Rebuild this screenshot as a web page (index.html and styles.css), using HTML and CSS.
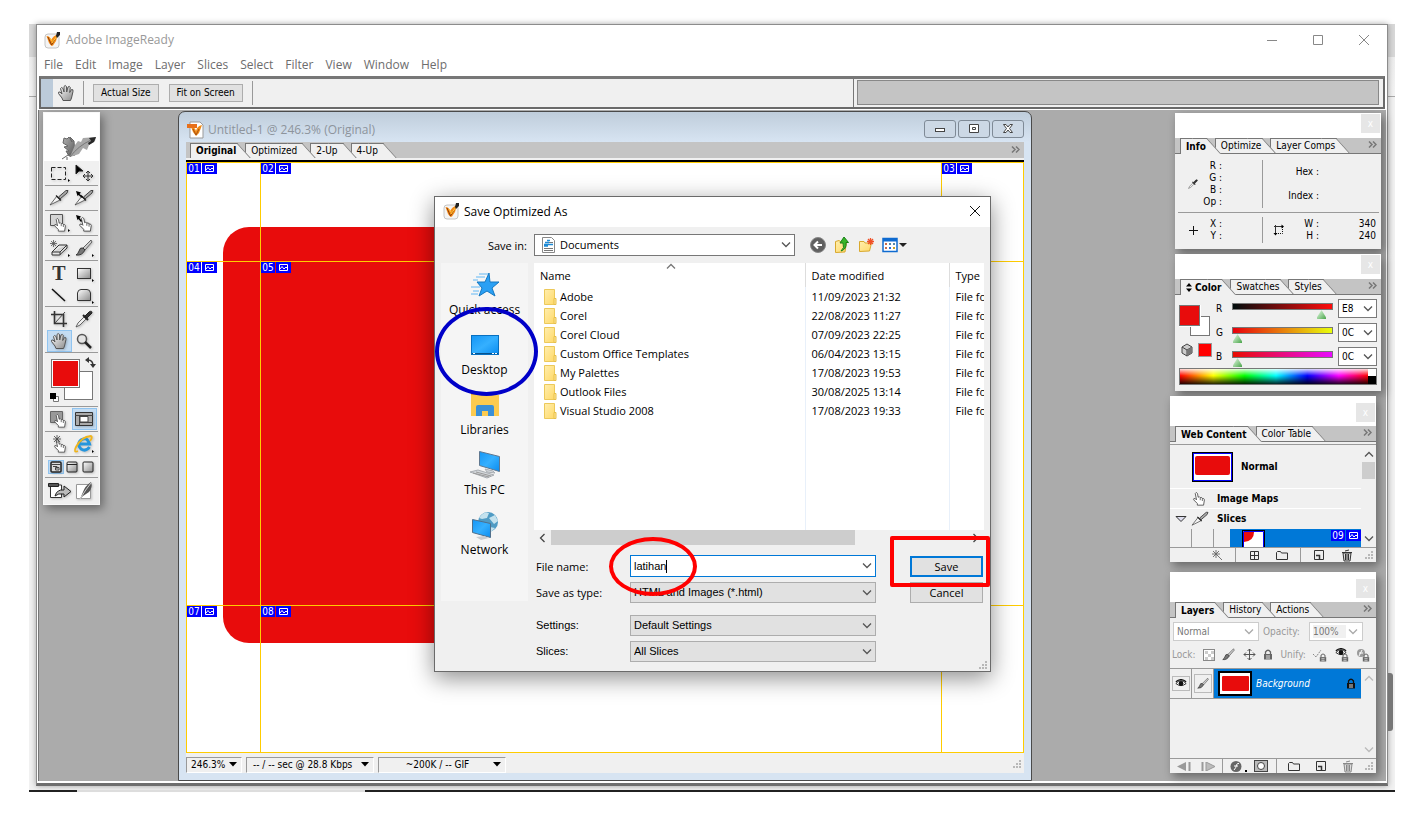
FILE: index.html
```html
<!DOCTYPE html>
<html lang="en">
<head>
<meta charset="utf-8">
<title>Adobe ImageReady</title>
<link rel="stylesheet" href="styles.css">
</head>
<body>
<svg class="sprite" aria-hidden="true">
  <defs>
    <linearGradient id="g-gray" x1="0" y1="0" x2="1" y2="1"><stop offset="0" stop-color="#fff"/><stop offset="1" stop-color="#8c8c8c"/></linearGradient>
    <linearGradient id="g-blue" x1="0" y1="0" x2="1" y2="1"><stop offset="0" stop-color="#1495f5"/><stop offset=".5" stop-color="#35b0ff"/><stop offset="1" stop-color="#0a8cf0"/></linearGradient>
    <linearGradient id="g-folder" x1="0" y1="0" x2="1" y2="1"><stop offset="0" stop-color="#ffeeae"/><stop offset="1" stop-color="#ffd968"/></linearGradient>
    <linearGradient id="g-feather" x1="0" y1="0" x2="1" y2="1"><stop offset="0" stop-color="#b5b5b5"/><stop offset="1" stop-color="#505050"/></linearGradient>
  </defs>
  <symbol id="hand" viewBox="0 0 18 18"><path d="M6 16.500 5 14 1.500 9.500Q1 7.500 3 8L5 10 3.500 4.500Q4.500 2.500 6 4.500L7 8 7 2.500Q8 .500 9.500 2.500L9.700 8 11 3Q12.500 1.500 13.300 3.500L12.700 8.500 14.500 5.500Q16.500 5 16 7.500L14.500 14 13.500 16.500Z" fill="url(#g-gray)" stroke="#555"/></symbol>
  <symbol id="point" viewBox="0 0 16 18"><path d="M6 17V15L1.500 10.500Q1 8 4 9.500L5 10.500 3.500 3Q4.500 .500 6.200 3L7 7.500Q8.500 6 9.500 8 11.500 7 12 9 14 8.500 14.500 10.500L13.500 17Z" fill="#fff" stroke="#444"/><path d="M9.500 8v3M12 9v3" stroke="#555"/></symbol>
  <symbol id="knife" viewBox="0 0 20 18"><path d="M1 16 8 7 11 11Z" fill="#f4f4f4" stroke="#444" stroke-width=".8"/><path d="M9.500 8 17 1.500H19L18 4 11 10Z" fill="#aaa" stroke="#333" stroke-width=".9"/><path d="M7 6.500 12 11.500" stroke="#222" stroke-width="1.200"/></symbol>
  <symbol id="brush" viewBox="0 0 18 18"><path d="M16 1 8 9 10 11 17 3Z" fill="#ccc" stroke="#444" stroke-width=".8"/><path d="M8 9Q5 8 4 12 3 15 1 16 7 17 10 11Z" fill="#777" stroke="#222" stroke-width=".8"/></symbol>
  <symbol id="dropper" viewBox="0 0 18 18"><path d="M1 17 3 13 9 7 11 9 5 15Z" fill="#eee" stroke="#444" stroke-width=".8"/><path d="M8 5 13 10" stroke="#222" stroke-width="2"/><path d="M10 6 14 2Q17 0 17 3L12 8Z" fill="#333" stroke="#222"/></symbol>
  <symbol id="trash" viewBox="0 0 12 13"><path d="M2 4H10L9 12H3Z" fill="#ddd" stroke="currentColor"/><path d="M1 3.500H11M4 2 8 1M4.500 5V11M6 5V11M7.500 5V11" stroke="currentColor" fill="none"/></symbol>
  <symbol id="folder" viewBox="0 0 12 10"><path d="M.500 9.500V2.500L1.500 1.500H4.500L5.500 3H11.500V9.500Z" fill="#eee" stroke="currentColor"/></symbol>
  <symbol id="page" viewBox="0 0 10 10"><path d="M.500 9.500V.500H9.500V9.500Z" fill="#eee" stroke="currentColor"/><path d="M2 5.500H5.500V9" fill="none" stroke="currentColor" stroke-width="1.500"/></symbol>
  <symbol id="grip" viewBox="0 0 9 9"><path d="M6 0h2v2h-2zM3 3h2v2h-2zM6 3h2v2h-2zM0 6h2v2h-2zM3 6h2v2h-2zM6 6h2v2h-2z" fill="#b8b8b8"/></symbol>
  <symbol id="down" viewBox="0 0 10 6"><path d="M1 .500 5 4.500 9 .500" fill="none" stroke="currentColor" stroke-width="1.300"/></symbol>
  <symbol id="tri" viewBox="0 0 8 5"><path d="M0 0H8L4 4.500Z" fill="#000"/></symbol>
  <symbol id="more" viewBox="0 0 9 7"><path d="M1 .500 4 3.500 1 6.500M5 .500 8 3.500 5 6.500" fill="none" stroke="#777" stroke-width="1.500"/></symbol>
  <symbol id="pic" viewBox="0 0 15 11"><path d="M3.500 2.500H11.500V8.500H3.500ZM4 7 6 4.500 8 7 10 5 11 6" fill="none" stroke="#fff"/></symbol>
  <symbol id="lock" viewBox="0 0 10 11"><path d="M2.500 5V3Q5-.500 7.500 3V5" fill="none" stroke="currentColor" stroke-width="1.300"/><path d="M1 5H9V10.500H1Z" fill="currentColor"/><path d="M3 7H7M3 9H7" stroke="#ddd"/></symbol>
  <symbol id="eye" viewBox="0 0 14 10"><path d="M1 5Q7-1.500 13 5 7 10 1 5Z" fill="#fff" stroke="#111"/><circle cx="7" cy="5" r="2.800" fill="#111"/><path d="M1 3Q7-2 13 3" fill="none" stroke="#111" stroke-width="1.500"/></symbol>
  <symbol id="appicon" viewBox="0 0 18 18"><rect x="1" y="3" width="14" height="14" rx="3" fill="#f4f4f4" stroke="#c4c4c4"/><path d="M2.500 5Q6 5 7 9 9 5 14 3L12 10 9 14.500 7.500 15 5 12Z" fill="#f48a18"/><path d="M4 6 7.500 14 11 8" fill="none" stroke="#8a3c08"/><path d="M6 7 8 10M8 12 13 5" stroke="#ffc83a"/><path d="M13 1H16V4L13 7 12 5Z" fill="#222"/></symbol>
  <symbol id="dir" viewBox="0 0 14 16"><path d="M1.500.500H11.500V15.500H1.500Z" fill="url(#g-folder)" stroke="#ecc95a"/><path d="M11 9.500H13V15.500H11Z" fill="#ffe79a" stroke="#e8c04a"/></symbol>
</svg>

<div class="desktop">
  <div class="app">
    <header class="titlebar">
      <svg class="i18"><use href="#appicon"/></svg>
      <h1>Adobe ImageReady</h1>
      <div class="winbtns">
        <button aria-label="Minimize"><svg width="12" height="12"><path d="M1 6.500H11" stroke="#888"/></svg></button>
        <button aria-label="Maximize"><svg width="12" height="12"><path d="M1.500 1.500H10.500V10.500H1.500Z" fill="none" stroke="#888"/></svg></button>
        <button aria-label="Close"><svg width="12" height="12"><path d="M1 1 11 11M11 1 1 11" stroke="#888"/></svg></button>
      </div>
    </header>
    <nav class="menubar">
      <button>File</button><button>Edit</button><button>Image</button><button>Layer</button><button>Slices</button><button>Select</button><button>Filter</button><button>View</button><button>Window</button><button>Help</button>
    </nav>
    <div class="options">
      <span class="handle"></span>
      <svg class="i18"><use href="#hand"/></svg>
      <span class="vline"></span>
      <button>Actual Size</button><button>Fit on Screen</button>
      <span class="vline"></span>
      <div class="well"><span></span></div>
    </div>

    <main class="workspace">
      <aside class="toolbox float">
        <div class="feather"><svg width="36" height="23"><path d="M1 22 10 16M6 20V23M3 1 6 2 8 0 11 5 9 0 13 4 14 18 8 19 5 14 8 14 3 10 7 9 2 6Z" fill="url(#g-feather)" stroke="#666"/><path d="M9 20 14 8 17 4 20 5 22 1 35 0 34 4 28 8 26 13 22 11 18 17Z" fill="#a8a8a8"/><path d="M28 1 35 0 33 5 28 8 27 6 30 4Z" fill="#292929"/><path d="M9 20Q17 9 30 3" stroke="#777" fill="none"/></svg></div>
        <div class="tools">
          <button aria-label="Marquee"><svg width="20" height="18"><rect x="2.500" y="3.500" width="14" height="12" fill="none" stroke="#222" stroke-dasharray="4 2"/><path d="M19 15v3l2-1.500z"/></svg></button>
          <button aria-label="Move"><svg width="20" height="18"><path d="M2 1 9 7 5 7 2 10Z" stroke="#222"/><path d="M14 7V17M9 12H19M12 9l2-2 2 2M12 15l2 2 2-2M11 10l-2 2 2 2M17 10l2 2-2 2" fill="none" stroke="#333"/></svg></button>
        </div>
        <div class="tools">
          <button aria-label="Slice"><svg width="20" height="18"><use href="#knife"/></svg></button>
          <button aria-label="Slice select"><svg width="20" height="18"><use href="#knife"/><path d="M2 2 7 3.500 5.500 5 9 8 8 9 4.500 6 3.500 7Z"/></svg></button>
        </div>
        <div class="tools">
          <button aria-label="Image map"><svg width="20" height="18"><path d="M1.500.500H13.500V11.500H1.500Z" fill="#d5d5d5" stroke="#555"/><use href="#point" x="4" y="3" width="14" height="15"/><path d="M19 15v3l2-1.500z"/></svg></button>
          <button aria-label="Image map select"><svg width="20" height="18"><use href="#point" x="4" y="2" width="15" height="16"/><path d="M2 1 7 2.500 5.500 4 8 7 7 8 4.500 5 3.500 6Z"/></svg></button>
        </div>
        <div class="tools">
          <button aria-label="Eraser"><svg width="20" height="18"><path d="M3 13 10 6H18L11 13ZM3 13V16H10.500L18 9V6" fill="#e4e4e4" stroke="#333"/><path d="M11 13V16" stroke="#333"/><path d="M4.500 1V8M1 4.500H8M2 2l5 5M7 2l-5 5" stroke="#555" stroke-width=".8"/><path d="M19 15v3l2-1.500z"/></svg></button>
          <button aria-label="Brush"><svg width="20" height="18"><use href="#brush"/><path d="M18 15v3l2-1.500z"/></svg></button>
        </div>
        <div class="tools tall">
          <button aria-label="Type" class="type">T</button>
          <button aria-label="Rectangle"><svg width="20" height="18"><rect x="3.500" y="4.500" width="13" height="10" fill="url(#g-gray)" stroke="#333"/><path d="M18 15v3l2-1.500z"/></svg></button>
          <button aria-label="Line"><svg width="20" height="18"><path d="M3 3 16 15" stroke="#111" stroke-width="1.500"/></svg></button>
          <button aria-label="Tab rectangle"><svg width="20" height="18"><path d="M3.500 14.500V7Q4 3.500 7 3.500H13Q16 3.500 16.500 7V14.500Z" fill="url(#g-gray)" stroke="#333"/><path d="M18 15v3l2-1.500z"/></svg></button>
        </div>
        <div class="tools tall">
          <button aria-label="Crop"><svg width="20" height="18"><path d="M2 4.500H14.500V17M5.500 1V13.500H18" fill="none" stroke="#333" stroke-width="1.600"/><path d="M6 13 16 2" stroke="#444"/></svg></button>
          <button aria-label="Eyedropper"><svg width="18" height="18"><use href="#dropper"/></svg></button>
          <button aria-label="Hand" class="on"><svg width="18" height="18"><use href="#hand"/></svg></button>
          <button aria-label="Zoom"><svg width="18" height="18"><circle cx="7" cy="7" r="4.500" fill="#e4e4e4" stroke="#555" stroke-width="1.500"/><path d="M10 10 16 16" stroke="#222" stroke-width="2.500"/></svg></button>
        </div>
        <div class="swatches">
          <svg width="48" height="46"><rect x="16.500" y="14.500" width="28" height="28" fill="#fff" stroke="#777"/><rect x="3.500" y="2.500" width="28" height="28" fill="#fff" stroke="#777"/><rect x="5" y="4" width="25" height="25" fill="#e80c0c"/><path d="M40 3Q45 3 45 9" fill="none" stroke="#333" stroke-width="1.500"/><path d="M37 3 41 0V6ZM42 7H48L45 11Z" fill="#333"/><path d="M5.500 39.500H10.500V44.500H5.500Z" fill="#fff" stroke="#777"/><path d="M2 36H8V42H2Z"/></svg>
        </div>
        <div class="tools">
          <button aria-label="Image map visibility"><svg width="20" height="18"><path d="M1.500 1.500H13.500V12.500H1.500Z" fill="#999" stroke="#666"/><use href="#point" x="4" y="3" width="14" height="15"/></svg></button>
          <button aria-label="Slice visibility" class="on"><svg width="20" height="16"><path d="M1.500 1.500H18.500V14.500H1.500Z" fill="#aaa" stroke="#333"/><path d="M1 4.500H19M5.500 5V14M5 11.500H19" stroke="#444"/><path d="M6 5.500H14V11H6Z" fill="#fff" stroke="#444"/></svg></button>
        </div>
        <div class="tools">
          <button aria-label="Rollover preview"><svg width="20" height="18"><use href="#point" x="4" y="3" width="14" height="15"/><path d="M8 0V8M4 4H12M5 1l6 6M11 1l-6 6" stroke="#444" stroke-width=".8"/></svg></button>
          <button aria-label="Preview in browser"><svg width="20" height="18"><path d="M15.500 12Q12 17 7 14 2 9 7 5 13 1 15.500 9H5" fill="none" stroke="#2695dc" stroke-width="3"/><path d="M4 16Q-1 18 2 12 7 2 17 1 19 2 16 6" fill="none" stroke="#f0b51c" stroke-width="1.800"/><path d="M18 15v3l2-1.500z"/></svg></button>
        </div>
        <div class="tools three">
          <button aria-label="Standard screen" class="on"><svg width="12" height="12"><rect x="1" y="1" width="10" height="10" rx="1" fill="#ddd" stroke="#222" stroke-width="1.500"/><path d="M1 3.500H11M3 5.500H7V8M5.500 6.500H9V9H5.500Z" fill="none" stroke="#444"/></svg></button>
          <button aria-label="Full screen with menu"><svg width="12" height="12"><rect x="1" y="1" width="10" height="10" rx="1" fill="url(#g-gray)" stroke="#222"/><path d="M1 3.500H11" stroke="#222"/></svg></button>
          <button aria-label="Full screen"><svg width="12" height="12"><rect x="1" y="1" width="10" height="10" rx="1" fill="url(#g-gray)" stroke="#222"/></svg></button>
        </div>
        <div class="tools last">
          <button aria-label="Export"><svg width="26" height="18"><path d="M3.500 3V15.500H14.500V3Z" fill="#fff" stroke="#333"/><path d="M1.500 1.500H11.500V4.500H1.500Z" fill="#555" stroke="#222"/><path d="M8 14Q10 7 17 8V4L24 9.500 17 15V12Q11 11 8 14Z" fill="#bbb" stroke="#222"/></svg></button>
          <button aria-label="Edit in Photoshop"><svg width="20" height="18"><path d="M2.500 2.500H16.500V16.500H2.500Z" fill="#fff" stroke="#999"/><path d="M17 0Q19 5 15 10L9 14 6 17 9 10Q11 4 17 0Z" fill="#555"/><path d="M6 17Q12 7 17 1" stroke="#ccc" fill="none"/></svg></button>
        </div>
      </aside>

      <section class="doc">
        <header class="doc-title">
          <svg class="i18"><path d="M3 1H13L16 4V17H3Z" fill="#fff" stroke="#999"/><path d="M4 6Q8 6 9 10 10 5 15 4L12 12 9 15 6 11Z" fill="#f08a15"/><path d="M6 8 9 14 12 8" fill="none" stroke="#a85010"/><path d="M0 3H10V7H0Z" fill="#e8701a"/></svg>
          <h2>Untitled-1 @ 246.3% (Original)</h2>
          <div class="doc-btns">
            <button aria-label="Minimize"><svg width="12" height="10"><rect x="1.500" y="4.500" width="9" height="3" fill="#fff" stroke="#444"/></svg></button>
            <button aria-label="Restore"><svg width="12" height="10"><path d="M1.500.500H10.500V8.500H1.500ZM4.500 3.500H7.500V5.500H4.500Z" fill="#fff" stroke="#444"/></svg></button>
            <button aria-label="Close"><svg width="12" height="10"><path d="M1.500.500H4L6 3 8 .500H10.500L7.500 4.500 10.500 8.500H8L6 6 4 8.500H1.500L4.500 4.500Z" fill="#fff" stroke="#444"/></svg></button>
          </div>
        </header>
        <div class="tabs doc-tabs">
          <button class="tab active">Original</button><button class="tab">Optimized</button><button class="tab">2-Up</button><button class="tab">4-Up</button>
          <svg class="more"><use href="#more"/></svg>
        </div>
        <div class="canvas">
          <div class="shape"></div>
          <div class="slice"><span>01</span><svg><use href="#pic"/></svg></div>
          <div class="slice"><span>02</span><svg><use href="#pic"/></svg></div>
          <div class="slice"><span>03</span><svg><use href="#pic"/></svg></div>
          <div class="slice"><span>04</span><svg><use href="#pic"/></svg></div>
          <div class="slice"><span>05</span><svg><use href="#pic"/></svg></div>
          <div class="slice"></div>
          <div class="slice"><span>07</span><svg><use href="#pic"/></svg></div>
          <div class="slice"><span>08</span><svg><use href="#pic"/></svg></div>
          <div class="slice"></div>
        </div>
        <footer class="status">
          <button class="zoom">246.3%<svg><use href="#tri"/></svg></button>
          <button class="stat">-- / -- sec @ 28.8 Kbps<svg><use href="#tri"/></svg></button>
          <button class="stat">~200K / -- GIF<svg><use href="#tri"/></svg></button>
          <svg class="grip"><use href="#grip"/></svg>
        </footer>
      </section>

      <section class="panel float info">
        <div class="panel-top"><button aria-label="Close">x</button></div>
        <div class="tabs"><button class="tab active">Info</button><button class="tab">Optimize</button><button class="tab">Layer Comps</button><svg class="more"><use href="#more"/></svg></div>
        <div class="info-body">
          <div class="cell"><svg width="10" height="10"><use href="#dropper"/></svg><div class="keys"><span>R :</span><span>G :</span><span>B :</span><span>Op :</span></div></div>
          <div class="cell hex"><div class="keys wide"><span>Hex :</span><span>Index :</span></div></div>
          <div class="cell"><svg width="10" height="10"><path d="M5.500 1V10M1 5.500H10" stroke="#111"/></svg><div class="keys"><span>X :</span><span>Y :</span></div></div>
          <div class="cell"><svg width="12" height="12"><path d="M1 2.500H9M2.500 1V10" stroke="#333"/><path d="M9.500 3V9.500H3" fill="none" stroke="#111" stroke-dasharray="1 1"/><path d="M8.500.500 11 2.500 8.500 4.500ZM.500 9 2.500 11.500 4.500 9Z"/></svg><div class="keys"><span>W :</span><span>H :</span></div><div class="keys vals"><span>340</span><span>240</span></div></div>
        </div>
      </section>

      <section class="panel float color">
        <div class="panel-top"><button aria-label="Close">x</button></div>
        <div class="tabs"><button class="tab active"><svg width="6" height="9"><path d="M0 3.500 3 0 6 3.500ZM0 5.500 3 9 6 5.500Z"/></svg>Color</button><button class="tab">Swatches</button><button class="tab">Styles</button><svg class="more"><use href="#more"/></svg></div>
        <div class="color-body">
          <svg class="chips" width="34" height="56"><rect x="11.500" y="11.500" width="19" height="19" fill="#fff" stroke="#777"/><rect x="0" y="0" width="22" height="22" fill="#fff"/><rect x=".5" y=".5" width="20" height="20" fill="#e80c0c" stroke="#777"/><path d="M3 42 8 39 13 42V48L8 51 3 48Z" fill="#ccc" stroke="#444"/><path d="M3 42 8 45 13 42M8 45V51" fill="none" stroke="#444"/><path d="M8 45V51L13 48V42Z" fill="#777"/><rect x="19.500" y="38.500" width="13" height="13" fill="red" stroke="#999"/></svg>
          <div class="channels">
            <label for="r">R</label><input id="r" class="r" type="range" min="0" max="255" value="238"><span class="combo"><select aria-label="Red value"><option>E8</option></select><svg class="chev"><use href="#down"/></svg></span>
            <label for="g">G</label><input id="g" class="g" type="range" min="0" max="255" value="0"><span class="combo"><select aria-label="Green value"><option>0C</option></select><svg class="chev"><use href="#down"/></svg></span>
            <label for="b">B</label><input id="b" class="b" type="range" min="0" max="255" value="0"><span class="combo"><select aria-label="Blue value"><option>0C</option></select><svg class="chev"><use href="#down"/></svg></span>
          </div>
          <div class="spectrum"><span></span></div>
        </div>
      </section>

      <section class="panel float web">
        <div class="panel-top"><button aria-label="Close">x</button></div>
        <div class="tabs"><button class="tab active">Web Content</button><button class="tab">Color Table</button><svg class="more"><use href="#more"/></svg></div>
        <div class="scroller">
          <div class="rows">
            <div class="row normal"><svg width="41" height="30"><rect width="41" height="30"/><rect x="1.500" y="1.500" width="38" height="27" fill="#fff" stroke="#00f"/><rect x="3" y="4" width="35" height="19" rx="2" fill="#e80c0c"/></svg><b>Normal</b></div>
            <div class="row maps"><svg width="14" height="15"><use href="#point"/></svg><b>Image Maps</b></div>
            <div class="row slices"><svg width="12" height="8"><path d="M1 1.500H11L6 6.500Z" fill="#dde" stroke="#333"/></svg><svg width="20" height="16"><use href="#knife"/></svg><b>Slices</b></div>
            <div class="row nine"><span class="box"></span><span class="box"></span><span class="gap"></span><div class="sel"><svg width="23" height="17"><rect x=".5" y=".5" width="22" height="20" fill="#fff" stroke="#000"/><path d="M2 2H12Q12 11 2 12Z" fill="#e80c0c"/><path d="M1.500 17V1.500H21.500V17" fill="none" stroke="#00f"/></svg><span class="slice"><span>09</span><svg><use href="#pic"/></svg></span></div></div>
          </div>
          <div class="vscroll"><svg class="up"><use href="#down"/></svg><span class="thumb"></span><svg class="dn"><use href="#down"/></svg></div>
        </div>
        <div class="panel-tools">
          <button aria-label="Rollover state"><svg width="12" height="12"><path d="M5 1V9M1 5H9M2 2 11 11M8 2 2 8" stroke="#666" stroke-width=".9"/></svg></button><i></i>
          <button aria-label="Slice grid"><svg width="11" height="11"><path d="M1.500 1.500H9.500V9.500H1.500ZM5.500 1V10M1 5.500H10" fill="none" stroke="#333"/></svg></button>
          <button aria-label="New folder"><svg width="12" height="10"><use href="#folder"/></svg></button><i></i>
          <button aria-label="New slice"><svg width="10" height="10"><use href="#page"/></svg></button>
          <button aria-label="Delete"><svg width="12" height="13"><use href="#trash"/></svg></button>
          <svg class="grip"><use href="#grip"/></svg>
        </div>
      </section>

      <section class="panel float layers">
        <div class="panel-top"><button aria-label="Close">x</button></div>
        <div class="tabs"><button class="tab active">Layers</button><button class="tab">History</button><button class="tab">Actions</button><svg class="more"><use href="#more"/></svg></div>
        <div class="blend">
          <span class="combo"><select aria-label="Blend mode"><option>Normal</option></select><svg class="chev"><use href="#down"/></svg></span>
          <label for="opacity">Opacity:</label>
          <span class="combo pct"><select id="opacity"><option>100%</option></select><svg class="chev"><use href="#down"/></svg></span>
        </div>
        <div class="locks">
          <span>Lock:</span>
          <button aria-label="Lock transparency"><svg width="12" height="12"><rect x=".5" y=".5" width="11" height="11" fill="#fff" stroke="#888"/><path d="M2 2h3v3h3v-3h3v3h-3v3h3v3h-3v-3h-3v3h-3v-3h3v-3h-3z" fill="#ccc"/></svg></button>
          <button aria-label="Lock pixels"><svg width="13" height="13"><use href="#brush"/></svg></button>
          <button aria-label="Lock position"><svg width="13" height="13"><path d="M6.500 1V12M1 6.500H12M4.500 3l2-2 2 2M4.500 10l2 2 2-2M3 4.500l-2 2 2 2M10 4.500l2 2-2 2" fill="none" stroke="#555"/></svg></button>
          <button aria-label="Lock all"><svg width="10" height="11"><use href="#lock"/></svg></button>
          <span>Unify:</span>
          <button aria-label="Unify position"><svg width="14" height="14"><path d="M0 6 3 9 8 2" fill="none" stroke="#888" stroke-dasharray="2 1"/><use href="#lock" x="6" y="5" width="8" height="9"/></svg></button>
          <button aria-label="Unify visibility"><svg width="14" height="14"><use href="#eye" width="12" height="9"/><use href="#lock" x="6" y="5" width="8" height="9"/></svg></button>
          <button aria-label="Unify style"><svg width="14" height="14"><circle cx="5" cy="5" r="4" fill="#999"/><path d="M3 8 6 2M3 5H7" stroke="#fff"/><use href="#lock" x="6" y="5" width="8" height="9"/></svg></button>
        </div>
        <div class="scroller">
          <div class="rows">
            <div class="layer">
              <button aria-label="Visibility"><svg width="12" height="9"><use href="#eye"/></svg></button>
              <button aria-label="Editing"><svg width="12" height="13"><use href="#brush"/></svg></button>
              <div class="sel"><svg width="34" height="25"><rect x="1" y="1" width="32" height="23" fill="#fff" stroke="#000" stroke-width="2"/><rect x="4" y="5" width="27" height="15" rx="1" fill="#e80c0c"/></svg><em>Background</em><svg class="lk"><use href="#lock"/></svg></div>
            </div>
          </div>
          <div class="vscroll off"><svg class="up"><use href="#down"/></svg><svg class="dn"><use href="#down"/></svg></div>
        </div>
        <div class="panel-tools">
          <button aria-label="Previous frame"><svg width="15" height="9"><path d="M0 4.500 9 0V9Z" fill="#999"/><path d="M12.500 0V9" stroke="#999" stroke-width="2"/></svg></button>
          <button aria-label="Next frame"><svg width="15" height="9"><path d="M15 4.500 6 0V9Z" fill="#bbb" stroke="#999"/><path d="M2.500 0V9" stroke="#999" stroke-width="2"/></svg></button><i></i>
          <button aria-label="Layer style"><svg width="18" height="13"><circle cx="6" cy="6.500" r="5.500" fill="#666"/><path d="M4 10Q6 8 6.500 5 7 3 9 3.500M4 6H8" fill="none" stroke="#fff"/><path d="M15 10h2v2h-2z"/></svg></button>
          <button aria-label="Layer mask"><svg width="14" height="12"><rect x=".5" y=".5" width="13" height="11" fill="#bbb" stroke="#444"/><circle cx="7" cy="6" r="3.500" fill="#fff" stroke="#444"/></svg></button><i></i>
          <button aria-label="New set"><svg width="12" height="10"><use href="#folder"/></svg></button>
          <button aria-label="New layer"><svg width="10" height="10"><use href="#page"/></svg></button>
          <button aria-label="Delete layer" class="dim"><svg width="12" height="13"><use href="#trash"/></svg></button>
          <svg class="grip"><use href="#grip"/></svg>
        </div>
      </section>
    </main>
  </div>
  <span class="bg-thumb"></span>
  <span class="bg-edge"></span>

  <form class="dialog" onsubmit="return false">
    <header class="dlg-title"><svg class="i18"><use href="#appicon"/></svg><h2>Save Optimized As</h2><button type="button" aria-label="Close"><svg width="12" height="12"><path d="M1 1 11 11M11 1 1 11" stroke="#111"/></svg></button></header>
    <div class="savein">
      <label for="savein">Save in:</label>
      <span class="combo"><svg class="docicon" width="13" height="16"><path d="M.500.500H9.500L12.500 3.500V15.500H.500Z" fill="#fff" stroke="#888"/><path d="M5 3.500H8M3 5.500H7M2 7.500H11M2 9H6" stroke="#1d8ad6" stroke-width="1.500"/><path d="M7 5.500H11M2 11.500H11M2 13.500H11" stroke="#777"/></svg><select id="savein"><option>Documents</option></select><svg class="chev"><use href="#down"/></svg></span>
      <button type="button" aria-label="Back"><svg width="16" height="16"><circle cx="8" cy="8" r="7.500" fill="#606060" stroke="#888"/><path d="M12 8H5M8 4.500 4.500 8 8 11.500" stroke="#fff" stroke-width="2" fill="none"/></svg></button>
      <button type="button" aria-label="Up one level"><svg width="16" height="16"><path d="M1.500 15.500V4.500L5 3.500 7 5H12.500L11 15Z" fill="url(#g-folder)" stroke="#d9a92e"/><path d="M7 14Q11 11 9 6H6L10 0 14.500 5.500H12Q13 12 7 14Z" fill="#38b528" stroke="#188018"/></svg></button>
      <button type="button" aria-label="New folder"><svg width="16" height="16"><path d="M1.500 14.500V4.500H6L7 6H13.500L11.500 14Z" fill="url(#g-folder)" stroke="#d9a92e"/><path d="M12.500 1V8M9 4.500H16M10 2l5 5M15 2l-5 5" stroke="#f05028" stroke-width="1.300"/></svg></button>
      <button type="button" aria-label="View menu"><svg width="25" height="16"><rect x="1" y="1.500" width="14" height="13" fill="#fff" stroke="#0f6bd0" stroke-width="1.500"/><path d="M1 3H15" stroke="#0f6bd0" stroke-width="3"/><path d="M3 6h2v2H3zM3 10h2v2H3z" fill="#c86a4a"/><path d="M7 6h2v2H7zM11 6h2v2h-2z" fill="#58a"/><path d="M7 10h2v2H7z" fill="#246bd8"/><path d="M11 10h2v2h-2z" fill="#c8a020"/><path d="M17 6H25L21 10Z" fill="#222"/></svg></button>
    </div>
    <div class="dlg-body">
      <nav class="places">
        <button type="button"><svg width="30" height="30"><path d="M19 2 20 11 29 11 22 17 25 25 17 20 9 25 12 17 7 11 15 11Z" fill="#2aa0f4" stroke="#1477c0"/><path d="M9 3H18M6 6H15M3 9H8M1 16H10M3 20H9M1 23H8" stroke="#62b8f4"/></svg>Quick access</button>
        <button type="button"><svg width="30" height="30"><rect x="1.500" y="4.500" width="27" height="19" fill="url(#g-blue)" stroke="#0870c0"/><path d="M2 22.500H28" stroke="#07528c"/><path d="M3 22.500H5M22 22.500H28" stroke="#fff" stroke-dasharray="2 1"/></svg>Desktop</button>
        <button type="button"><svg width="30" height="30"><path d="M1 2H11L13 4H29V25H1Z" fill="#fccb50"/><path d="M1 2H11L13 4H1Z" fill="#e8a53a"/><path d="M6 25V16Q6 14 8 14H22Q24 14 24 16V25H18V20H12V25Z" fill="#3a90d8"/></svg>Libraries</button>
        <button type="button"><svg width="32" height="30"><path d="M10.500.500 30.500 5.500V20.500L10.500 14.500Z" fill="url(#g-blue)" stroke="#607890"/><path d="M16 18 24 20 26 22 18 21ZM1 21 9 19 25 24 18 27Z" fill="#d4d8dc" stroke="#a8adb2"/><path d="M4 22 20 26M7 21 22 25" stroke="#999"/></svg>This PC</button>
        <button type="button"><svg width="30" height="30"><circle cx="18" cy="11" r="10" fill="#4f9bc4"/><path d="M9 7Q14 0 19 2L17 7 12 8ZM19 7 25 4 28 10 24 13ZM20 16 25 17 21 21Z" fill="#c4e2ee"/><path d="M2.500 8.500 20.500 12.500V26.500L2.500 21.500Z" fill="url(#g-blue)" stroke="#50708c"/><path d="M6 26 14 25 19 27 11 29Z" fill="#c8ccd0"/></svg>Network</button>
      </nav>
      <div class="dlg-main">
        <div class="list">
          <table>
            <colgroup><col><col class="c2"><col class="c3"></colgroup>
            <thead><tr><th>Name<svg class="sort"><use href="#down"/></svg></th><th>Date modified</th><th>Type</th></tr></thead>
            <tbody>
              <tr><td><svg><use href="#dir"/></svg>Adobe</td><td>11/09/2023 21:32</td><td>File fo</td></tr>
              <tr><td><svg><use href="#dir"/></svg>Corel</td><td>22/08/2023 11:27</td><td>File fo</td></tr>
              <tr><td><svg><use href="#dir"/></svg>Corel Cloud</td><td>07/09/2023 22:25</td><td>File fo</td></tr>
              <tr><td><svg><use href="#dir"/></svg>Custom Office Templates</td><td>06/04/2023 13:15</td><td>File fo</td></tr>
              <tr><td><svg><use href="#dir"/></svg>My Palettes</td><td>17/08/2023 19:53</td><td>File fo</td></tr>
              <tr><td><svg><use href="#dir"/></svg>Outlook Files</td><td>30/08/2025 13:14</td><td>File fo</td></tr>
              <tr><td><svg><use href="#dir"/></svg>Visual Studio 2008</td><td>17/08/2023 19:33</td><td>File fo</td></tr>
              <tr class="fill"><td></td><td></td><td></td></tr>
            </tbody>
          </table>
        </div>
        <div class="hscroll"><svg class="lf"><use href="#down"/></svg><span></span><svg class="rt"><use href="#down"/></svg></div>
        <div class="fields">
          <label for="fname">File name:</label>
          <span class="combo file"><input id="fname" type="text" value="latihan"><i class="caret"></i><svg class="chev"><use href="#down"/></svg></span>
          <button class="save">Save</button>
          <label for="ftype">Save as type:</label>
          <span class="combo"><select id="ftype"><option>HTML and Images (*.html)</option></select><svg class="chev"><use href="#down"/></svg></span>
          <button type="button">Cancel</button>
          <label for="fset" class="apart">Settings:</label>
          <span class="combo apart"><select id="fset"><option>Default Settings</option></select><svg class="chev"><use href="#down"/></svg></span>
          <label for="fslices" class="own">Slices:</label>
          <span class="combo"><select id="fslices"><option>All Slices</option></select><svg class="chev"><use href="#down"/></svg></span>
        </div>
      </div>
    </div>
    <svg class="grip"><use href="#grip"/></svg>
    <span class="mark mark-desktop"></span>
    <span class="mark mark-name"></span>
    <span class="mark mark-save"></span>
  </form>
</div>
</body>
</html>
```

FILE: styles.css
```css
:root {
  --ui: "Open Sans", "Noto Sans", sans-serif;
  --small: "DejaVu Sans Condensed", "DejaVu Sans", sans-serif;
  --face: #f0f0f0;
  --line: #9a9a9a;
}
* { box-sizing: border-box; }
body {
  margin: 0;
  padding: 24px 33px 32px 29px;
  min-height: 100vh;
  display: flex;
  background: #fff;
  font: 10px/12px var(--small);
  color: #000;
}
h1, h2 { margin: 0; font-weight: normal; }
button, select, input { font: inherit; color: inherit; margin: 0; padding: 0; border: 0; background: none; }
svg { display: block; flex: none; }
.sprite { position: absolute; width: 0; height: 0; }
.i18 { width: 18px; height: 18px; }
.grip { width: 9px; height: 9px; }

.desktop {
  position: relative;
  flex: 1;
  display: flex;
  padding: 0 7px 4px 7px;
  background: linear-gradient(#d8d8d8 33px, #eee 33px, #f4f4f4 72px, #aaa 72px, #aaa 73px, #f2f2f2 73px);
  border-bottom: 2px solid #222;
}
.bg-edge { position: absolute; left: 48px; width: 288px; bottom: -2px; height: 2px; background: #ddd; }
.bg-thumb { position: absolute; right: 2px; top: 649px; width: 5px; height: 58px; background: #777; border-radius: 0 3px 3px 0; }

.app {
  flex: 1;
  display: flex;
  flex-direction: column;
  background: #fff;
  border: 1px solid #8c8c8c;
  border-bottom: 3px solid #6e6e6e;
  box-shadow: 0 0 6px rgba(0,0,0,.35);
}
.titlebar { display: flex; align-items: center; gap: 4px; height: 29px; padding-left: 7px; font: 12px/16px var(--ui); color: #999; }
.titlebar h1 { font-size: 12px; }
.winbtns { margin-left: auto; display: flex; }
.winbtns button { width: 46px; display: grid; place-items: center; }
.menubar { display: flex; gap: 12px; padding: 0 7px; height: 22px; align-items: center; font: 12px/16px var(--ui); color: #6d6d6d; }
.options {
  display: flex; align-items: center;
  height: 33px; margin: 0 2px;
  background: var(--face);
  border: 2px solid #6a6a6a;
  border-top: 3px solid #777;
}
.handle { align-self: stretch; width: 12px; margin-right: 4px; background: #bccbda; }
.vline { width: 1px; height: 24px; background: #999; margin: 0 9px 0 8px; }
.options button { height: 18px; margin-right: 10px; padding: 0 7px; background: #e1e1e1; border: 1px solid #adadad; }
.options button + .vline { margin: 0 0 0 -1px; }
.well { margin-left: auto; width: 530px; align-self: stretch; padding: 1px 4px 2px 3px; display: flex; border-left: 1px solid #777; }
.well span { flex: 1; background: #c4c4c4; border: 1px solid #888; }

.workspace { position: relative; flex: 1; margin: 1px 1px 2px; background: #ababab; border-left: 1px solid #777; }
.float { position: absolute; background: var(--face); box-shadow: 3px 4px 9px rgba(0,0,0,.4); }

.toolbox { left: 4px; top: 2px; width: 57px; border: 1px solid #f8f8f8; }
.feather { height: 48px; background: #fff; display: flex; align-items: flex-end; padding: 0 0 1px 17px; }
.tools {
  display: grid; grid-template-columns: 25px 25px; justify-content: center;
  grid-auto-rows: 22px; align-content: center; min-height: 25px;
  margin: 0 1px; border-bottom: 1px solid var(--line);
}
.tools.tall { min-height: 46px; }
.tools button, .swatches { display: grid; place-items: center; }
.tools svg { overflow: visible; filter: drop-shadow(1px 1px 1px rgba(0,0,0,.2)); }
.tools .on { background: #c4dcf2; outline: 1px solid #90c4f0; outline-offset: -1px; }
.tools .type { font: bold 20px/20px "Liberation Serif", serif; color: #333; }
.swatches { height: 54px; margin: 0 1px; border-bottom: 1px solid var(--line); }
.tools.three { grid-template-columns: 16px 16px 16px; grid-auto-rows: 14px; min-height: 21px; }
.tools.last { border: 0; min-height: 26px; }

.doc {
  position: absolute; left: 139px; right: 354px; top: 1px; bottom: 0;
  display: flex; flex-direction: column;
  padding: 0 7px 7px;
  background: linear-gradient(#bfcddb, #d7e4f2 30px);
  border: 1px solid #4a4a4a; border-radius: 7px 7px 0 0;
}
.doc-title { display: flex; align-items: center; gap: 3px; height: 30px; padding: 5px 0 0 1px; color: #8d949c; font: 12px/16px var(--ui); }
.doc-title h2 { font-size: 12px; }
.doc-btns { margin-left: auto; display: flex; gap: 2px; padding-bottom: 2px; }
.doc-btns button { width: 32px; height: 18px; display: grid; place-items: center; border: 1px solid #7f8a96; border-radius: 3px; background: #ccd8e5; }

.tabs { display: flex; align-items: flex-end; height: 16px; padding: 0 4px 0 5px; background: #c4c4c4; border-bottom: 1px solid #777; }
.tab {
  position: relative; display: flex; align-items: center; gap: 3px;
  height: 15px; padding: 0 1px 0 5px; white-space: pre;
  background: var(--face); border-top: 1px solid #777; border-left: 1px solid #777;
}
.tab::after {
  content: ""; position: absolute; z-index: -1; top: -1px; bottom: 0; right: -7px; width: 14px;
  background: var(--face); border-top: 1px solid #777; border-right: 1px solid #777; transform: skewX(42deg);
}
.tab + .tab { margin-left: 8px; }
.tab:nth-of-type(1) { z-index: 4; }
.tab:nth-of-type(2) { z-index: 3; }
.tab:nth-of-type(3) { z-index: 2; }
.tab:nth-of-type(4) { z-index: 1; }
.tab.active { font-weight: bold; height: 16px; margin-bottom: -1px; }
.more { width: 9px; height: 7px; margin: 0 0 5px auto; }
.doc-tabs { height: 20px; padding: 0 4px 2px; background: #c4c4c4 linear-gradient(#f0f0f0,#f0f0f0) bottom / 100% 2px no-repeat; border-bottom: 2px solid #000; }
.doc-tabs .tab.active { height: 15px; margin: 0; }
.doc-tabs .tab + .tab { padding-right: 5px; }

.canvas {
  position: relative; flex: 1; display: grid;
  grid-template-columns: 74px 1fr 81px; grid-template-rows: 99px 1fr 146px;
  background: #fff; border: 1px solid #fc0;
}
.shape { position: absolute; left: 36px; right: 36px; top: 64px; bottom: 109px; background: #e80c0c; border-radius: 26px; }
.slice { position: relative; display: flex; align-items: flex-start; gap: 1px; }
.slice > span { width: 14px; height: 11px; background: #00f; color: #fff; font: 10px/11px var(--small); text-align: center; }
.slice > svg { width: 15px; height: 11px; background: #00f; }
.canvas .slice:not(:nth-child(3n+1)) { border-right: 1px solid #fc0; }
.canvas .slice:nth-child(-n+7) { border-bottom: 1px solid #fc0; }

.status { display: flex; align-items: center; height: 20px; gap: 4px; background: var(--face); padding-top: 3px; }
.status button { display: flex; align-items: center; height: 16px; padding: 0 4px; border: 1px solid; border-color: #999 #fff #fff #999; gap: 4px; }
.status button svg { width: 8px; height: 5px; }
.status .stat { width: 128px; gap: 9px; justify-content: flex-end; }
.status .stat + .stat { gap: 24px; }
.status .grip { margin-left: auto; margin-right: 2px; }

.panel { width: 206px; display: flex; flex-direction: column; }
.panel-top { height: 25px; padding: 1px 1px; background: #fff; text-align: right; }
.panel-top button { width: 19px; height: 19px; background: #e6e6e6; color: #fff; }
.web .panel-top, .layers .panel-top { height: 30px; padding-top: 7px; }
.info { right: 5px; top: 3px; height: 136px; }
.color { right: 5px; top: 144px; height: 137px; }
.web { right: 10px; top: 286px; height: 166px; }
.layers { right: 10px; top: 462px; height: 201px; }

.info-body { flex: 1; display: grid; grid-template-columns: 85px 1fr; grid-template-rows: 57px 1fr; padding: 2px 2px 2px 3px; }
.cell { display: flex; align-items: center; padding: 0 3px 0 10px; }
.cell:nth-child(-n+2) { border-bottom: 1px solid var(--line); }
.cell:nth-child(odd) { background: linear-gradient(var(--line), var(--line)) right / 1px calc(100% - 8px) no-repeat; }
.cell:nth-child(even) { padding-left: 10px; }
.keys { display: flex; flex-direction: column; width: 24px; text-align: right; }
.cell:nth-child(even) .keys { width: 34px; }
.cell .keys.wide { width: 46px; gap: 12px; }
.cell .keys.vals { width: auto; margin-left: auto; }

.color-body { flex: 1; display: grid; grid-template-columns: 34px 1fr; padding: 4px 4px 5px; gap: 0 2px; position: relative; }
.chips { margin-top: 6px; }
.channels { display: grid; grid-template-columns: 11px 101px 39px; gap: 5px 5px; justify-content: end; align-content: start; align-items: center; }
.channels input { appearance: none; align-self: start; width: 101px; height: 7px; margin-top: 4px; }
.channels input::-webkit-slider-runnable-track { height: 7px; border: 1px solid #777; background: var(--ramp); }
.channels input::-webkit-slider-thumb { appearance: none; width: 9px; height: 9px; margin-top: 6px; background: linear-gradient(135deg, #eaffea, #49a449); clip-path: polygon(50% 0, 100% 80%, 100% 100%, 0 100%, 0 80%); }
.r { --ramp: linear-gradient(90deg, #000c0c, #ff0c0c); }
.g { --ramp: linear-gradient(90deg, #e8000c, #e8ff0c); }
.b { --ramp: linear-gradient(90deg, #e80c00, #e80cff); }
.combo { display: grid; grid-template: 1fr / 1fr auto; align-items: center; background: #fff; border: 1px solid #7a7a7a; }
.combo > select, .combo > input { appearance: none; grid-area: 1 / 1 / 2 / 3; min-width: 0; width: 100%; height: 100%; outline: 0; }
.chev { grid-area: 1 / 2; width: 10px; height: 6px; margin-right: 3px; color: #555; pointer-events: none; }
.channels .combo { height: 19px; padding-left: 3px; }
.spectrum {
  grid-column: 1 / 3; height: 17px; display: flex; justify-content: flex-end; align-items: stretch; border: 1px solid #777;
  background: linear-gradient(rgba(255,255,255,.85), transparent 45%, rgba(0,0,0,.85)), linear-gradient(90deg, red, #ff0 17%, #0f0 33%, #0ff 49%, #00f 65%, #f0f 81%, red 96%);
}
.spectrum span { width: 8px; background: linear-gradient(#fff 50%, #000 50%); }

.scroller { flex: 1; display: flex; min-height: 0; overflow: hidden; border-top: 1px solid var(--line); }
.web .scroller { margin-top: 2px; }
.rows { flex: 1; min-width: 0; overflow: hidden; }
.row { display: flex; align-items: center; height: 20px; border-bottom: 1px solid #fff; padding-left: 22px; gap: 10px; }
.row.normal { height: 44px; gap: 8px; }
.row.maps { gap: 11px; }
.row.slices { padding-left: 5px; gap: 3px; border: 0; height: 20px; }
.row.slices b { margin-left: 4px; }
.row.nine { padding: 0; gap: 0; align-items: stretch; border: 0; }
.row .box { width: 22px; border-right: 1px solid var(--line); }
.row .gap { width: 16px; }
.row .sel { flex: 1; display: flex; justify-content: space-between; background: #0078d7; padding-left: 12px; }
.sel { align-items: center; }
.row .sel { align-items: flex-start; padding-top: 1px; }
.vscroll { width: 15px; display: flex; flex-direction: column; align-items: center; color: #555; padding: 6px 0 5px; }
.vscroll svg { width: 10px; height: 6px; }
.vscroll .up { transform: rotate(180deg); }
.vscroll .dn { margin-top: auto; }
.vscroll .thumb { width: 13px; height: 17px; margin-top: 5px; background: #cdcdcd; }
.vscroll.off { color: #bbb; }
.panel-tools { display: flex; align-items: center; justify-content: flex-end; height: 15px; gap: 0 13px; padding-right: 2px; border-top: 1px solid var(--line); color: #333; }
.panel-tools button { display: grid; place-items: center; }
.web .panel-tools { gap: 8px; }
.web .panel-tools button { width: 20px; }
.panel-tools i { width: 1px; height: 14px; background: var(--line); }
.panel-tools .dim { color: #888; }
.layers .panel-tools { gap: 7px; }
.layers .panel-tools button { width: 20px; }
.layers .panel-tools button:nth-of-type(-n+4) { width: 16px; }

.blend { display: flex; align-items: center; padding: 4px 3px 0; gap: 4px; color: #999; }
.blend .combo { width: 86px; height: 19px; padding-left: 3px; border-color: #ccc; color: #777; }
.blend .combo.pct { width: 54px; margin-left: 5px; }
.blend .pct select { background: var(--face); background-clip: content-box; padding: 2px 16px 2px 0; }
.blend .chev { color: #aaa; margin-right: 4px; }
.locks { display: flex; align-items: center; justify-content: space-between; height: 27px; padding: 0 6px 0 2px; color: #999; }
.locks button { color: #666; }
.layer { display: flex; height: 30px; border-bottom: 1px solid var(--line); }
.layer button { width: 22px; display: grid; place-items: center; border-right: 1px solid var(--line); }
.layer button svg { outline: 1px solid #bbb; outline-offset: 2px; }
.layer .sel { flex: 1; display: flex; gap: 4px; background: #0078d7; color: #fff; padding: 0 4px; }
.layer .lk { width: 10px; height: 11px; color: #111; margin: 0 1px 0 auto; }

.dialog {
  position: absolute; z-index: 2; left: 405px; top: 172px; width: 557px; height: 476px;
  display: flex; flex-direction: column;
  background: var(--face); border: 1px solid #6a6a6a;
  box-shadow: 0 6px 22px rgba(0,0,0,.45);
  font: 11px/15px var(--ui);
}
.dlg-title { display: flex; align-items: center; gap: 3px; height: 30px; padding: 0 9px 2px 8px; background: #fff; font-size: 12px; }
.dlg-title h2 { font-size: 12px; }
.dlg-title button { margin-left: auto; }
.savein { display: flex; align-items: center; height: 36px; padding-left: 6px; gap: 8px; }
.savein label { width: 86px; text-align: right; }
.savein .combo { width: 261px; height: 22px; margin: 0 7px 0 -1px; border-color: #777; }
.savein .combo select { padding: 0 0 2px 25px; }
.savein .docicon { grid-area: 1 / 1; margin-left: 7px; }
.savein .chev, .fields .chev { margin-right: 3px; }
.dlg-body { flex: 1; display: flex; padding: 0 6px 8px; gap: 6px; min-height: 0; }
.places { width: 87px; height: 338px; padding-top: 8px; background: #f5f5f5; display: flex; flex-direction: column; }
.places button { height: 60px; display: flex; flex-direction: column; align-items: center; gap: 1px; font: 12px/15px var(--ui); }
.dlg-main { flex: 1; min-width: 0; display: flex; flex-direction: column; }
.list { height: 267px; background: #fff; overflow: hidden; }
table { width: 100%; height: 100%; table-layout: fixed; border-collapse: collapse; }
.c2 { width: 144px; } .c3 { width: 35px; }
th, td { height: 19px; padding: 0 0 0 6px; text-align: left; font-weight: normal; white-space: nowrap; overflow: hidden; border-left: 1px solid #e8f0fa; }
th { height: 24px; border-left-color: #ddd; position: relative; }
tr > :first-child { border-left: 0; }
td:first-child { padding-left: 26px; }
td svg { width: 14px; height: 16px; float: left; margin: 0 0 -1px -17px; }
.fill td { height: auto; }
.sort { position: absolute; left: 132px; top: 0; width: 10px; height: 6px; transform: rotate(180deg); color: #777; }
.hscroll { display: flex; align-items: center; height: 15px; color: #444; padding: 0 3px; }
.hscroll svg { width: 10px; height: 6px; }
.hscroll span { width: 304px; height: 15px; margin-left: 4px; background: #cdcdcd; }
.hscroll .lf { transform: rotate(90deg); }
.hscroll .rt { transform: rotate(-90deg); margin-left: auto; }
.fields { display: grid; grid-template-columns: 94px 246px 73px; justify-content: start; gap: 5px 0; padding: 10px 0 0 2px; align-items: center; }
.fields > button { margin-left: 34px; width: 73px; height: 21px; background: #e1e1e1; border: 1px solid #adadad; }
.fields > .save { border: 2px solid #0078d7; }
.fields .combo { height: 21px; padding-left: 3px; background: #e1e1e1; border-color: #adadad; font: 11px/13px "Liberation Sans", sans-serif; }
.fields .file { position: relative; height: 22px; background: #fff; border-color: #0078d7; }
.fields label:nth-of-type(n+3) { font-family: "Liberation Sans", sans-serif; }
.fields .apart { margin-top: 7px; }
.fields .own { grid-column: 1; }
.caret { position: absolute; left: 35px; top: 4px; width: 1px; height: 13px; background: #000; }
.dialog > .grip { position: absolute; right: 2px; bottom: 1px; }
.mark { position: absolute; pointer-events: none; }
.mark-desktop { left: 0; top: 110px; width: 103px; height: 89px; border: 4px solid #0000c8; border-radius: 50%; }
.mark-name { left: 174px; top: 340px; width: 88px; height: 59px; border: 4px solid red; border-radius: 50%; }
.mark-save { left: 455px; top: 339px; width: 100px; height: 51px; border: 4px solid red; border-radius: 2px; }
```
